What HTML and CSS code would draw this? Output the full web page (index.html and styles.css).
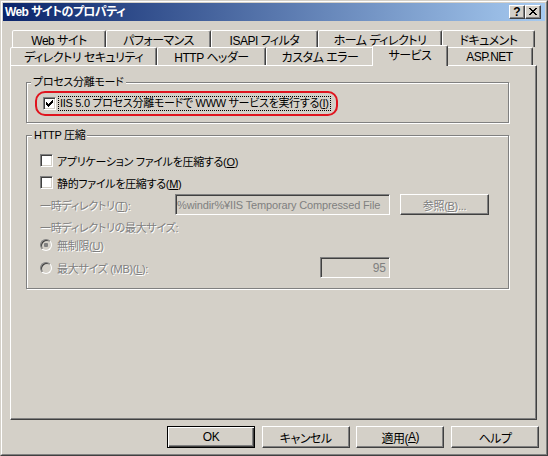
FILE: index.html
```html
<!DOCTYPE html>
<html lang="ja">
<head>
<meta charset="utf-8">
<title>Web サイトのプロパティ</title>
<link rel="stylesheet" href="styles.css">
</head>
<body>
<div class="window">
  <div class="frame">
    <div class="titlebar">
      <span class="title">Web サイトのプロパティ</span>
      <div class="capbtns">
        <span class="capbtn help">?</span>
        <span class="capbtn close"><svg width="8" height="7" viewBox="0 0 8 7" shape-rendering="crispEdges"><path fill="#000" d="M0 0h2v1H0zM6 0h2v1H6zM1 1h2v1H1zM5 1h2v1H5zM2 2h4v1H2zM3 3h2v1H3zM2 4h4v1H2zM1 5h2v1H1zM5 5h2v1H5zM0 6h2v1H0zM6 6h2v1H6z"/></svg></span>
      </div>
    </div>
    <div class="client">
      <div class="tabs">
        <div class="tabrow back">
          <div class="tab t-web">Web サイト</div>
          <div class="tab t-perf">パフォーマンス</div>
          <div class="tab t-isapi">ISAPI フィルタ</div>
          <div class="tab t-home">ホーム ディレクトリ</div>
          <div class="tab t-doc">ドキュメント</div>
        </div>
        <div class="tabrow front">
          <div class="tab t-sec">ディレクトリ セキュリティ</div>
          <div class="tab t-http">HTTP ヘッダー</div>
          <div class="tab t-err">カスタム エラー</div>
          <div class="tab t-svc selected">サービス</div>
          <div class="tab t-asp">ASP.NET</div>
        </div>
      </div>
      <div class="panel">
        <fieldset class="group g1">
          <legend>プロセス分離モード</legend>
          <div class="mark">
            <span class="cb"><svg width="7" height="7" viewBox="0 0 7 7" shape-rendering="crispEdges"><path fill="#000" d="M0 2h1v3H0zM1 3h1v3H1zM2 4h1v3H2zM3 3h1v3H3zM4 2h1v3H4zM5 1h1v3H5zM6 0h1v3H6z"/></svg></span>
            <span class="focus">IIS 5.0 プロセス分離モードで WWW サービスを実行する(<u>I</u>)</span>
          </div>
        </fieldset>
        <fieldset class="group g2">
          <legend>HTTP 圧縮</legend>
          <div class="row r1"><span class="cb"></span><span class="lbl">アプリケーション ファイルを圧縮する(<u>O</u>)</span></div>
          <div class="row r2"><span class="cb"></span><span class="lbl">静的ファイルを圧縮する(<u>M</u>)</span></div>
          <div class="row r3">
            <span class="dis dirlbl">一時ディレクトリ(<u>T</u>):</span>
            <span class="edit path">%windir%¥IIS Temporary Compressed File</span>
            <span class="btn browse"><span class="dis">参照(<u>B</u>)...</span></span>
          </div>
          <div class="row r4"><span class="dis">一時ディレクトリの最大サイズ:</span></div>
          <div class="row r5"><span class="radio on"><span class="dot"></span></span><span class="dis">無制限(<u>U</u>)</span></div>
          <div class="row r6">
            <span class="radiocell"><span class="radio"></span><span class="dis">最大サイズ (MB)(<u>L</u>):</span></span>
            <span class="edit size">95</span>
          </div>
        </fieldset>
      </div>
      <div class="buttons">
        <span class="btn default">OK</span>
        <span class="btn">キャンセル</span>
        <span class="btn">適用(<u>A</u>)</span>
        <span class="btn">ヘルプ</span>
      </div>
    </div>
  </div>
</div>
</body>
</html>
```
FILE: styles.css
```css
* { box-sizing: border-box; }
html, body { margin: 0; padding: 0; }
body {
  width: 548px;
  height: 456px;
  background: #d4d0c8;
  font-family: "Liberation Sans", "Noto Sans CJK JP", sans-serif;
  font-size: 11px;
  letter-spacing: -0.3px;
  color: #000;
  font-feature-settings: "palt";
}
u { text-underline-offset: 1px; }

.window {
  width: 548px;
  height: 456px;
  border: 1px solid;
  border-color: #d4d0c8 #404040 #404040 #d4d0c8;
}
.frame {
  height: 100%;
  border: 1px solid;
  border-color: #fff #808080 #808080 #fff;
  padding: 1px;
  background: #d4d0c8;
  display: flex;
  flex-direction: column;
}

/* title bar */
.titlebar {
  flex: none;
  height: 18px;
  background: linear-gradient(to right, #0a246a, #a6caf0);
  display: flex;
  align-items: center;
  padding: 0 4px 0 2px;
}
.title {
  flex: 1;
  color: #fff;
  font-size: 12px;
  font-weight: bold;
  letter-spacing: -0.6px;
  line-height: 18px;
  white-space: nowrap;
}
.capbtns { display: flex; }
.capbtn {
  width: 16px;
  height: 14px;
  background: #d4d0c8;
  border: 1px solid;
  border-color: #fff #404040 #404040 #fff;
  box-shadow: inset -1px -1px #808080;
  display: flex;
}
.help {
  justify-content: center;
  align-items: center;
  font: bold 12px "Liberation Sans", sans-serif;
  line-height: 12px;
  letter-spacing: 0;
}
.close { padding: 2px 0 0 3px; }
.close svg { display: block; }

/* client */
.client {
  flex: 1;
  padding: 9px 8px 0 7px;
  display: flex;
  flex-direction: column;
}
.tabrow { display: flex; }
.back { margin: 0 2px; height: 17px; }
.front { height: 18px; align-items: flex-end; }
.tab {
  flex: none;
  background: #d4d0c8;
  border: 1px solid;
  border-bottom: none;
  border-color: #fff #404040 transparent #fff;
  border-radius: 2px 2px 0 0;
  box-shadow: inset -1px 0 #808080;
  display: flex;
  align-items: center;
  justify-content: center;
  white-space: nowrap;
  font-size: 12px;
  letter-spacing: -0.5px;
}
.back .tab { height: 17px; }
.front .tab { height: 18px; }
.front .tab.selected {
  height: 21px;
  margin: 0 -2px -1px;
  padding-bottom: 3px;
  position: relative;
  z-index: 1;
}
.t-web { width: 94px; }
.t-perf { width: 105px; }
.t-isapi { width: 107px; }
.t-home { width: 124px; }
.t-doc { width: 93px; }
.t-sec { width: 147px; }
.t-http { width: 109px; }
.t-err { width: 108px; }
.t-svc { width: 76px; }
.t-asp { width: 87px; }

.panel {
  flex: none;
  height: 355px;
  border: 1px solid;
  border-color: #fff #404040 #404040 #fff;
  box-shadow: inset -1px -1px #808080;
  padding: 10px 0 0 15px;
}

/* group boxes */
.group {
  width: 483px;
  min-width: 0;
  margin: 0;
  padding: 0;
  border: 1px solid #808080;
  box-shadow: inset 1px 1px #fff, 1px 1px #fff;
}
.group legend {
  margin-left: 4px;
  padding: 0 2px;
  line-height: 13px;
  background: #d4d0c8;
  white-space: nowrap;
}
.g1 { padding-bottom: 6px; }
.g2 { margin-top: 6px; padding: 0 0 10px 0; }
.g2 legend { margin-left: 5px; }
.g2 .row { margin-left: 13px; }

.mark {
  display: flex;
  align-items: center;
  width: 303px;
  height: 25px;
  margin: 2px 0 0 8px;
  padding-left: 6px;
  border: 2px solid #e0141e;
  border-radius: 10px;
}
.focus {
  margin-left: 2px;
  padding: 0 1px;
  border: 1px dotted #000;
  line-height: 13px;
  white-space: nowrap;
}

.cb {
  flex: none;
  width: 13px;
  height: 13px;
  padding: 2px;
  background: #fff;
  border: 1px solid;
  border-color: #808080 #fff #fff #808080;
  box-shadow: inset 1px 1px #404040, inset -1px -1px #d4d0c8;
  display: flex;
}
.cb svg { display: block; }

.row { display: flex; align-items: center; white-space: nowrap; }
.r1 { height: 17px; margin-top: 10px; }
.r2 { height: 17px; margin-top: 5px; }
.r3 { height: 21px; margin-top: 3px; }
.r4 { height: 14px; margin-top: 5px; }
.r5 { height: 16px; margin-top: 3px; }
.r6 { height: 21px; margin-top: 4px; }
.row .cb { margin-right: 4px; }

.dis { color: #808080; text-shadow: 1px 1px 0 #fff; }
.dirlbl { width: 135px; }

.edit {
  height: 21px;
  background: #d4d0c8;
  color: #808080;
  border: 1px solid;
  border-color: #808080 #fff #fff #808080;
  box-shadow: inset 1px 1px #404040, inset -1px -1px #d4d0c8;
  display: flex;
  align-items: center;
  overflow: hidden;
  white-space: nowrap;
}
.path { width: 215px; padding-left: 1px; letter-spacing: -0.15px; }
.size { width: 70px; justify-content: flex-end; padding-right: 3px; letter-spacing: 0; font-size: 12px; }

.radiocell { width: 280px; display: flex; align-items: center; }
.radio {
  flex: none;
  width: 12px;
  height: 12px;
  margin-right: 5px;
  border-radius: 50%;
  background: #d4d0c8;
  border: 1px solid;
  border-color: #808080 #fff #fff #808080;
  box-shadow: inset 1px 1px #404040, inset -1px -1px #d4d0c8;
  display: flex;
  align-items: center;
  justify-content: center;
}
.dot {
  width: 4px;
  height: 4px;
  border-radius: 1px;
  background: #808080;
}

/* push buttons */
.btn {
  flex: none;
  width: 88px;
  height: 22px;
  background: #d4d0c8;
  border: 1px solid;
  border-color: #fff #404040 #404040 #fff;
  box-shadow: inset -1px -1px #808080;
  display: flex;
  align-items: center;
  justify-content: center;
  white-space: nowrap;
  font-size: 12px;
  letter-spacing: -0.5px;
}
.btn.default {
  border-color: #000;
  box-shadow: inset 1px 1px #fff, inset -1px -1px #404040, inset -2px -2px #808080;
}
.browse { width: 89px; height: 21px; margin-left: 10px; font-size: 11px; letter-spacing: -0.3px; }

.buttons {
  display: flex;
  justify-content: flex-end;
  gap: 6.67px;
  margin: 6px -2px 0 0;
}
```
